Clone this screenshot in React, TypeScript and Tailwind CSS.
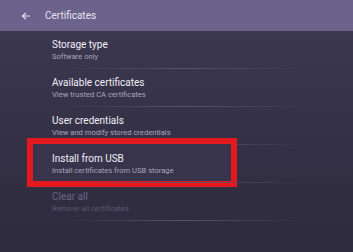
import React from "react";

const rows = [
  { t: "Storage type", s: "Software only", dim: false },
  { t: "Available certificates", s: "View trusted CA certificates", dim: false },
  { t: "User credentials", s: "View and modify stored credentials", dim: false },
  { t: "Install from USB", s: "Install certificates from USB storage", dim: false, hl: true },
  { t: "Clear all", s: "Remove all certificates", dim: true },
];

export default function App() {
  return (
    <div
      className="w-[353px] h-[252px] overflow-hidden flex flex-col"
      style={{ fontFamily: "Roboto, 'Noto Sans', sans-serif" }}
    >
      <div className="h-[31px] bg-[#6b638b] flex items-center shrink-0">
        <svg className="ml-[21px]" width="10" height="10" viewBox="0 0 24 24" fill="none" stroke="#ece9f5" strokeWidth="2.6" strokeLinecap="round" strokeLinejoin="round">
          <path d="M20 12H4" />
          <path d="M11 5l-7 7 7 7" />
        </svg>
        <span className="ml-[14px] text-[10px] leading-[13px] text-[#e6e2f2]">Certificates</span>
      </div>
      <div className="flex-1 bg-gradient-to-b from-[#3b374f] to-[#2e2b3d] relative">
        {rows.map((r, i) => (
          <div key={i} className="h-[38px] relative flex flex-col pl-[52px] pt-[7px]">
            {r.hl && (
              <div className="absolute left-[27px] top-[-7px] w-[210px] h-[49px] border-[6px] border-[#e3191f] bg-[#38344c]" />
            )}
            <div className={`relative text-[10px] leading-[13px] ${r.dim ? "text-[#6a6681]" : "text-[#f1eff7]"}`}>{r.t}</div>
            <div className={`relative mt-[1px] text-[7.6px] leading-[10px] ${r.dim ? "text-[#5d5973]" : "text-[#a9a5bb]"}`}>{r.s}</div>
            <div className="absolute bottom-0 left-[64px] w-[240px] h-px bg-gradient-to-r from-transparent via-[#57536e] to-transparent" />
          </div>
        ))}
      </div>
    </div>
  );
}
